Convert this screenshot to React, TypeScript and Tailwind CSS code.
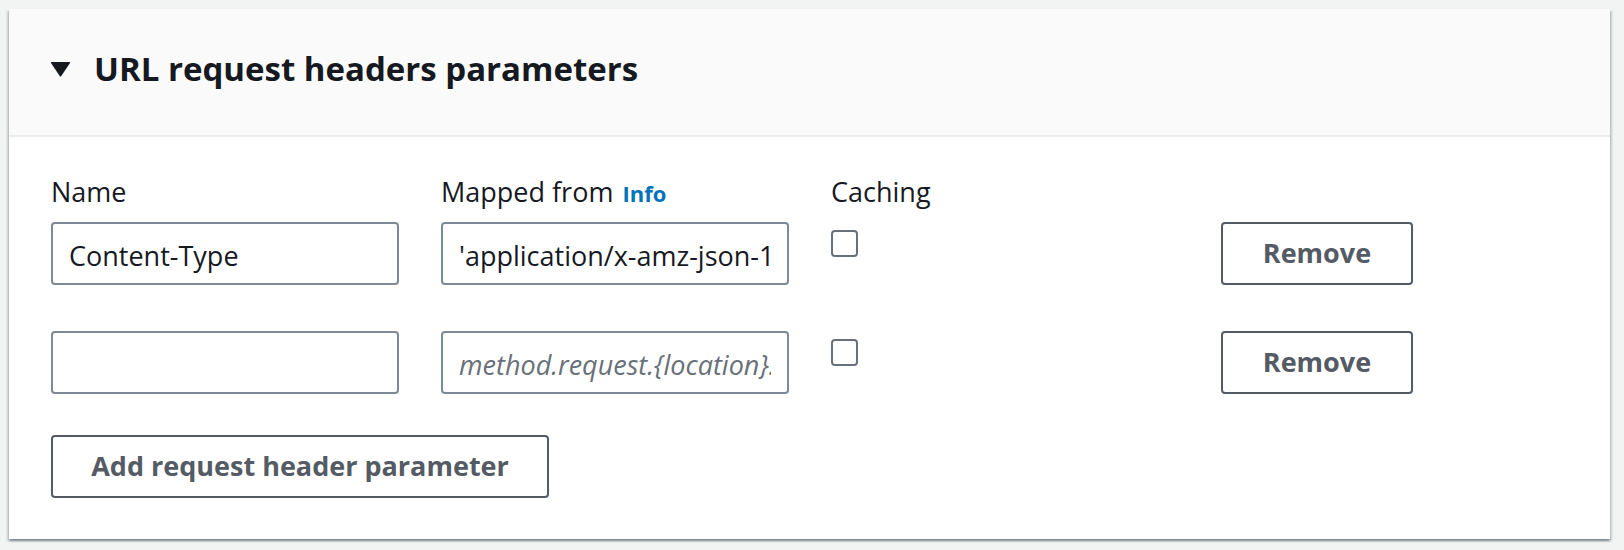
import React from 'react';

const font = { fontFamily: '"Open Sans", "Liberation Sans", sans-serif' };

const rows = [
  { name: 'Content-Type', mapped: "'application/x-amz-json-1.1'" },
  { name: '', mapped: '' },
];

function Caret() {
  return (
    <svg width="21" height="16" viewBox="0 0 21 16" aria-hidden>
      <path d="M1.5 1 H19.5 Q20.6 1 20 2 L11.3 15 Q10.5 16 9.7 15 L1 2 Q0.4 1 1.5 1 Z" fill="#16191f" />
    </svg>
  );
}

export default function App() {
  return (
    <div className="min-h-[550px] w-[1624px] bg-[#f2f3f3] pt-[9px] pl-[9px]" style={font}>
      <div className="w-[1601px] bg-white shadow-[0_2px_2px_0_rgba(0,28,36,0.3),2px_2px_2px_0_rgba(0,28,36,0.15),-2px_2px_2px_0_rgba(0,28,36,0.15)]">
        <div className="flex h-[128px] items-center gap-[23px] border-b-2 border-[#eaeded] bg-[#fafafa] pb-[6px] pl-[41px]">
          <Caret />
          <h2 className="text-[33px] font-bold leading-[46px] text-[#16191f]">URL request headers parameters</h2>
        </div>

        <div className="px-[42px] pt-[37px] pb-[41px]">
          <div className="grid grid-cols-[348px_348px_348px_348px] gap-x-[42px] text-[27px] leading-[36px] text-[#16191f]">
            <div>Name</div>
            <div className="flex items-baseline gap-[9px]">
              <span>Mapped from</span>
              <span className="text-[22px] font-bold text-[#0073bb]">Info</span>
            </div>
            <div>Caching</div>
            <div />
          </div>

          <div className="mt-[11px] flex flex-col gap-[46px]">
            {rows.map((r, i) => (
              <div key={i} className="grid grid-cols-[348px_348px_348px_348px] gap-x-[42px]">
                <input
                  readOnly
                  defaultValue={r.name}
                  className="h-[63px] w-[348px] rounded-[4px] border-2 border-[#7d8998] bg-white pt-[4px] pl-[16px] pr-[16px] text-[27px] text-[#16191f] outline-none"
                  style={font}
                />
                <input
                  readOnly
                  defaultValue={r.mapped}
                  placeholder="method.request.{location}.{name}"
                  className="h-[63px] w-[348px] rounded-[4px] border-2 border-[#7d8998] bg-white pt-[4px] pl-[16px] pr-[16px] text-[27px] text-[#16191f] outline-none placeholder:italic placeholder:text-[#687078]"
                  style={font}
                />
                <div className="pt-[8px]">
                  <div className="h-[27px] w-[27px] rounded-[4px] border-2 border-[#687078] bg-white" />
                </div>
                <div>
                  <button className="h-[63px] w-[192px] rounded-[4px] border-2 border-[#545b64] bg-white text-[27px] font-bold text-[#545b64]">
                    Remove
                  </button>
                </div>
              </div>
            ))}
          </div>

          <button className="mt-[41px] h-[63px] w-[498px] rounded-[4px] border-2 border-[#545b64] bg-white text-[27px] font-bold text-[#545b64]">
            Add request header parameter
          </button>
        </div>
      </div>
    </div>
  );
}
